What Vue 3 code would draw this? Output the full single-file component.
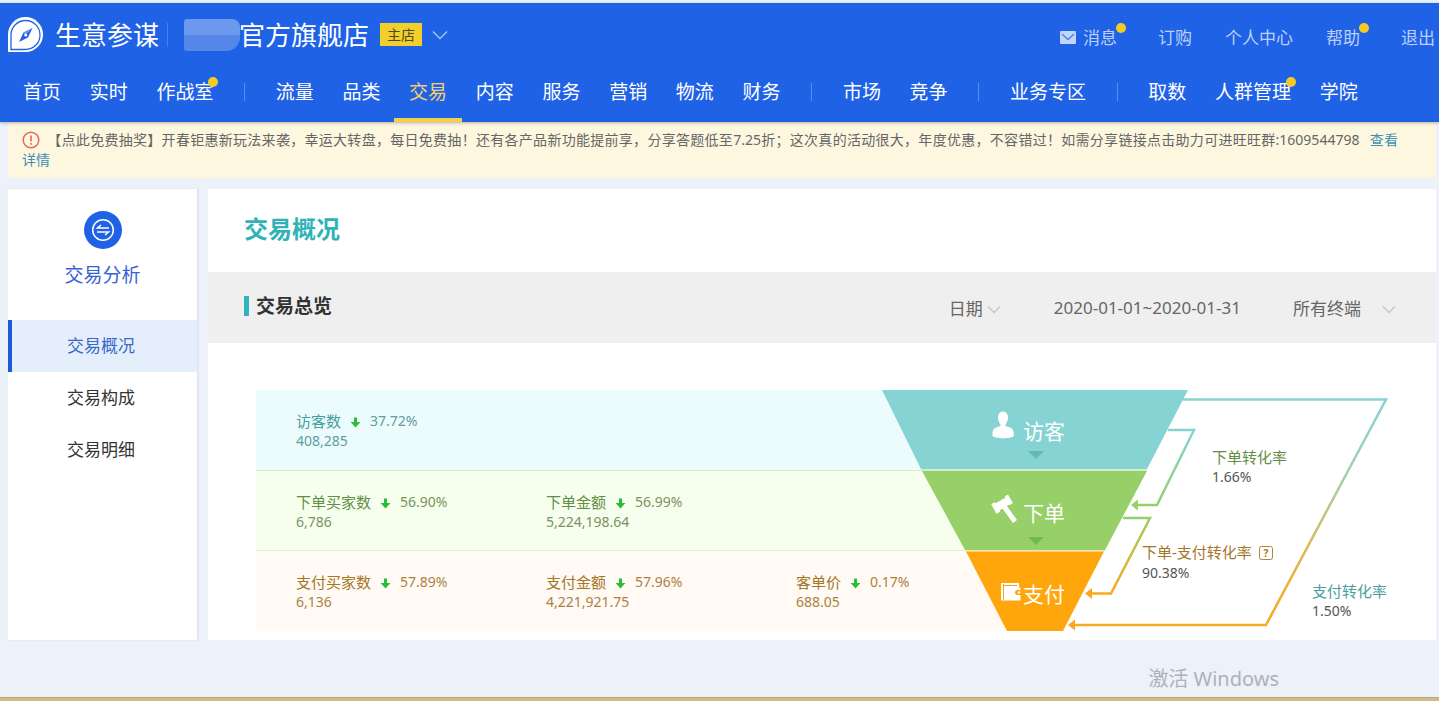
<script setup>
import { ref } from 'vue'

const navItems = [
  { text: '首页' }, { text: '实时' }, { text: '作战室', dot: true }, { sep: true },
  { text: '流量' }, { text: '品类' }, { text: '交易', active: true }, { text: '内容' },
  { text: '服务' }, { text: '营销' }, { text: '物流' }, { text: '财务' }, { sep: true },
  { text: '市场' }, { text: '竞争' }, { sep: true },
  { text: '业务专区' }, { sep: true },
  { text: '取数' }, { text: '人群管理', dot: true }, { text: '学院' },
]

const sideItems = ['交易概况', '交易构成', '交易明细']

const rows = [
  { tone: 'teal', metrics: [{ name: '访客数', change: '37.72%', value: '408,285' }] },
  {
    tone: 'green',
    metrics: [
      { name: '下单买家数', change: '56.90%', value: '6,786' },
      { name: '下单金额', change: '56.99%', value: '5,224,198.64' },
    ],
  },
  {
    tone: 'orange',
    metrics: [
      { name: '支付买家数', change: '57.89%', value: '6,136' },
      { name: '支付金额', change: '57.96%', value: '4,221,921.75' },
      { name: '客单价', change: '0.17%', value: '688.05' },
    ],
  },
]

const dateType = ref('日期')
const terminal = ref('所有终端')
</script>

<template>
  <div class="page">
    <header class="header">
      <div class="brand-row">
        <svg class="logo" width="36" height="36" viewBox="0 0 36 36" aria-hidden="true">
          <path d="M0 35V17.500A17.500 17.500 0 1 1 17.500 35Z" fill="#fff" />
          <path d="M3 32.500V17.500A14.500 14.500 0 1 1 17.500 32.500Z" fill="none" stroke="#2062e6" stroke-width="1.300" />
          <path d="M24.500 11L20 20.500L11 25L15.500 15.500Z" fill="#2062e6" />
          <path d="M24.500 11L15.500 15.500L17.500 18Z" fill="#6c98ef" />
          <circle cx="17.700" cy="18" r="1.500" fill="#fff" />
        </svg>
        <span class="brand">生意参谋</span>
        <span class="brand-line"></span>
        <span class="mask"></span>
        <span class="shop">官方旗舰店</span>
        <span class="badge">主店</span>
        <button class="shop-toggle" type="button" aria-label="切换店铺">
          <svg width="16" height="10" viewBox="0 0 16 10"><path d="M1 1.500L8 8.500L15 1.500" fill="none" stroke="#a9c3f7" stroke-width="1.300" /></svg>
        </button>
        <div class="links">
          <a href="#" class="mail dotted">
            <svg width="16" height="13" viewBox="0 0 16 13" aria-hidden="true">
              <rect width="16" height="13" rx="1" fill="#c3d5fa" />
              <path d="M2 3L8 8.500L14 3" fill="none" stroke="#4a80ea" stroke-width="1.300" />
            </svg>消息</a>
          <a href="#">订购</a>
          <a href="#">个人中心</a>
          <a href="#" class="dotted">帮助</a>
          <a href="#">退出</a>
        </div>
      </div>
      <nav class="nav">
        <template v-for="(item, i) in navItems" :key="i">
          <span v-if="item.sep" class="nav-sep"></span>
          <a v-else href="#" :class="{ active: item.active, dotted: item.dot }">{{ item.text }}</a>
        </template>
      </nav>
    </header>

    <div class="notice">
      <svg class="warn" width="18" height="18" viewBox="0 0 18 18" aria-hidden="true">
        <circle cx="9" cy="9" r="7.800" fill="none" stroke="#e3685a" stroke-width="1.500" />
        <path d="M9 4.500V10.500M9 12V13.800" stroke="#e3685a" stroke-width="1.600" />
      </svg>
      <span>【点此免费抽奖】开春钜惠新玩法来袭，幸运大转盘，每日免费抽！还有各产品新功能提前享，分享答题低至7.25折；这次真的活动很大，年度优惠，不容错过！如需分享链接点击助力可进旺旺群:1609544798</span>
      <a href="#">查看<span class="keep">详情</span></a>
    </div>

    <div class="body">
      <aside class="side">
        <div class="side-head">
          <svg width="38" height="38" viewBox="0 0 38 38" aria-hidden="true">
            <circle cx="19" cy="19" r="19" fill="#2062e6" />
            <circle cx="19" cy="19" r="10.300" fill="none" stroke="#fff" stroke-width="1.500" />
            <path d="M25 17H13.500L17 14M13 21H24.500L21 24" fill="none" stroke="#fff" stroke-width="1.500" />
          </svg>
          <span>交易分析</span>
        </div>
        <a v-for="(item, i) in sideItems" :key="item" href="#" class="side-item" :class="{ on: i === 0 }">{{ item }}</a>
      </aside>

      <main class="main">
        <h1>交易概况</h1>
        <div class="bar">
          <h2>交易总览</h2>
          <label class="pick">
            <select v-model="dateType" class="date-select" aria-label="日期类型"><option>日期</option></select>
            <svg width="14" height="9" viewBox="0 0 14 9" aria-hidden="true"><path d="M1 1.500L7 7.500L13 1.500" fill="none" stroke="#c6c6c6" stroke-width="1.500" /></svg>
          </label>
          <span class="range">2020-01-01~2020-01-31</span>
          <label class="pick wide">
            <select v-model="terminal" class="term-select" aria-label="终端"><option>所有终端</option></select>
            <svg width="14" height="9" viewBox="0 0 14 9" aria-hidden="true"><path d="M1 1.500L7 7.500L13 1.500" fill="none" stroke="#c6c6c6" stroke-width="1.500" /></svg>
          </label>
        </div>

        <div class="chart">
          <div class="rows">
            <div v-for="row in rows" :key="row.tone" class="row" :class="row.tone">
              <div v-for="m in row.metrics" :key="m.name" class="metric">
                <div class="line">
                  <span class="name">{{ m.name }}</span>
                  <svg width="11" height="11" viewBox="0 0 11 11" aria-label="下降"><path d="M4 0.500H7V5H10.500L5.500 10.500L0.500 5H4Z" fill="#2bbd3a" /></svg>
                  <span>{{ m.change }}</span>
                </div>
                <div class="line">{{ m.value }}</div>
              </div>
            </div>
          </div>

          <svg class="funnel" width="508" height="241" viewBox="0 0 508 241">
            <defs>
              <linearGradient id="gAll" gradientUnits="userSpaceOnUse" x1="0" y1="9" x2="0" y2="235">
                <stop offset="0" stop-color="#86d3d3" /><stop offset="0.350" stop-color="#a3cfae" />
                <stop offset="0.650" stop-color="#dcb95a" /><stop offset="1" stop-color="#f8a91f" />
              </linearGradient>
              <linearGradient id="gTop" gradientUnits="userSpaceOnUse" x1="0" y1="40" x2="0" y2="115">
                <stop offset="0" stop-color="#86d3d3" /><stop offset="1" stop-color="#97cf68" />
              </linearGradient>
              <linearGradient id="gLow" gradientUnits="userSpaceOnUse" x1="0" y1="128" x2="0" y2="203">
                <stop offset="0" stop-color="#97cf68" /><stop offset="1" stop-color="#f8a91f" />
              </linearGradient>
            </defs>
            <path d="M0 0H306L265 79H39Z" fill="#86d3d3" />
            <path d="M39 79H265V81H40Z" fill="#d3ecd2" />
            <path d="M40 81H265L223 160H83Z" fill="#97cf68" />
            <path d="M83 160H223L222 161.500H84Z" fill="#f3e6b5" />
            <path d="M84 161.500H222L181 241H125Z" fill="#ffa60d" />
            <path d="M146 61H162L154 69Z" fill="#62bcb6" />
            <path d="M146 147H162L154 155Z" fill="#70b955" />

            <g fill="none" stroke-width="2.500">
              <path d="M301 9.500H504L384 235H192" stroke="url(#gAll)" />
              <path d="M286 40H312L275 115H255" stroke="url(#gTop)" />
              <path d="M241 128H268L229 203.500H209" stroke="url(#gLow)" />
            </g>
            <path d="M186 235L193 229.500V240.500Z" fill="#f8a91f" />
            <path d="M249 115L256 109.500V120.500Z" fill="#97cf68" />
            <path d="M203 203.500L210 198V209Z" fill="#f8a91f" />

            <path d="M121 21.500C117.500 21.500 115.800 24.500 116 28C116.200 31 117.200 33 118.500 34.500V36C114 37 110.500 38.500 110.500 43V46C113 49 129 49 131.800 46V43C131.800 38.500 128 37 123.500 36V34.500C124.800 33 125.800 31 126 28C126.200 24.500 124.500 21.500 121 21.500Z" fill="#fff" />
            <g fill="#fff">
              <g transform="rotate(-30 120.500 114)">
                <rect x="112" y="110" width="17" height="8" />
                <rect x="110.500" y="108.500" width="4.500" height="11" rx="1" />
                <rect x="126" y="108.500" width="4" height="10" rx="1" />
              </g>
              <path d="M121 115L133 131.500" stroke="#fff" stroke-width="5" />
            </g>
            <path d="M119 193H137V197.500H138.500V210.500H119Z" fill="#fff" />
            <path d="M121.500 194V209.500M122 195.500H135" fill="none" stroke="#ffa60d" stroke-width="1" />
            <path d="M139 200H135.500A2.300 2.300 0 0 0 135.500 205H139Z" fill="#ffa60d" />
            <circle cx="137" cy="202.500" r="1.200" fill="#fff" />

            <g fill="#fff" font-size="21">
              <text x="141" y="49">访客</text>
              <text x="141" y="131">下单</text>
              <text x="141" y="212">支付</text>
            </g>
            <g font-size="15">
              <text x="330" y="73" fill="#648d45">下单转化率</text>
              <text x="260" y="168" fill="#a37628">下单-支付转化率</text>
              <text x="430" y="207" fill="#469fa0">支付转化率</text>
            </g>
            <g font-size="14" fill="#555">
              <text x="330" y="92">1.66%</text>
              <text x="260" y="188">90.38%</text>
              <text x="430" y="226">1.50%</text>
            </g>
            <rect x="377.500" y="156.500" width="13" height="13" rx="2" fill="none" stroke="#b0843c" />
            <text x="384" y="167" font-size="10" font-weight="700" text-anchor="middle" fill="#a37628">?</text>
          </svg>
        </div>
      </main>
    </div>

    <div class="watermark">激活 Windows</div>
    <div class="strip"></div>
  </div>
</template>

<style>
body { margin: 0; background: #edf1fa; }
</style>

<style scoped>
.page {
  position: relative;
  display: flex;
  flex-direction: column;
  min-height: 100vh;
  box-sizing: border-box;
  border-top: 3px solid #eaf1f0;
  font-family: "Noto Sans", "Noto Sans CJK SC", sans-serif;
  color: #333;
}
a { color: inherit; text-decoration: none; }
button { padding: 0; border: 0; background: none; }
svg { flex: none; display: block; }

.header { position: relative; z-index: 1; background: #2062e6; color: #fff; box-shadow: 0 1px 3px rgba(60, 70, 110, 0.4); }
.brand-row { display: flex; align-items: center; height: 63px; padding: 0 4px 0 8px; }
.brand { margin-left: 11px; font-size: 26px; line-height: 32px; }
.brand-line { width: 1px; height: 24px; margin: 0 16px 0 8px; background: #4a80ea; }
.mask { width: 56px; height: 32px; border-radius: 3px 8px 14px 3px; background: linear-gradient(#6c98ee 50%, #5587ea 50%); }
.shop { margin-left: -1px; font-size: 26px; line-height: 32px; }
.badge { margin-left: 11px; padding: 0 7px; background: #f3cf2a; color: #4a4a2a; font-size: 14px; line-height: 23px; }
.shop-toggle { margin-left: 10px; }
.links { display: flex; gap: 33px; margin-left: auto; color: #bcd0f9; font-size: 17px; line-height: 24px; padding-top: 6px; }
.links .dotted { margin-right: 8px; }
.mail { display: flex; align-items: center; gap: 7px; }
.dotted { position: relative; }
.dotted::after {
  content: "";
  position: absolute;
  top: -3px;
  right: -9px;
  width: 10px;
  height: 10px;
  border-radius: 50%;
  background: #f4cb22;
}
.nav { display: flex; justify-content: space-between; align-items: center; height: 56px; padding: 0 81px 0 23px; font-size: 19px; line-height: 52px; }
.nav a { height: 56px; }
.nav .dotted::after { top: 11px; right: -5px; }
.nav .active { position: relative; color: #f5d06b; }
.nav .active::after { content: ""; position: absolute; left: -15px; right: -15px; bottom: 0; height: 4px; background: #f3cf4a; }
.nav-sep { width: 1px; height: 18px; margin: 0 2px 4px; background: #5d8dec; }

.notice {
  margin: 0 3px 0 8px;
  padding: 8px 38px 8px 14px;
  border-radius: 0 0 4px 4px;
  background: #fdf7e0;
  color: #666;
  font-size: 14px;
  line-height: 20px;
  text-align: justify;
}
.warn { display: inline-block; vertical-align: -4px; margin-right: 7px; }
.notice a { margin-left: 10px; color: #3f8fb3; }
.keep { white-space: nowrap; }

.body { display: flex; gap: 11px; margin: 11px 3px 0 8px; }
.side { width: 189px; flex: none; background: #fff; box-shadow: 1px 0 2px rgba(120, 140, 190, 0.2); }
.side-head { display: flex; flex-direction: column; align-items: center; gap: 12px; padding: 22px 0 31px; color: #3a62d2; font-size: 19px; line-height: 28px; }
.side-item { display: block; font-size: 17px; line-height: 52px; padding-left: 59px; }
.side-item.on { padding-left: 55px; border-left: 4px solid #1c5bd8; background: #e5effc; color: #3a68c8; }

.main { flex: 1; min-width: 0; background: #fff; }
h1 { margin: 0; padding: 20px 36px 23px; color: #2fb2b8; font-size: 24px; line-height: 40px; }
.bar { display: flex; align-items: center; height: 71px; padding: 0 40px 0 36px; background: #efefef; color: #666; font-size: 17px; }
h2 { display: flex; align-items: center; gap: 7px; margin: 0 auto 4px 0; color: #333; font-size: 19px; line-height: 24px; }
h2::before { content: ""; width: 5px; height: 20px; background: #2fb5bd; }
.pick { display: flex; align-items: center; gap: 4px; padding-top: 3px; }
.pick.wide { gap: 20px; }
select { appearance: none; margin: 0; padding: 0; border: 0; background: none; color: inherit; font: inherit; line-height: 24px; }
.date-select { width: 34px; }
.term-select { width: 69px; }
.range { margin: 0 52px 0 53px; }

.chart { display: grid; grid-template-columns: 1fr 150px 358px; padding: 47px 46px 9px 48px; }
.rows { grid-area: 1 / 1 / 2 / 3; }
.row { display: flex; height: 80px; box-sizing: border-box; padding: 21px 0 0 40px; font-size: 14px; line-height: 20px; }
.metric { width: 250px; flex: none; }
.line { display: flex; align-items: center; }
.name { font-size: 15px; }
.line svg { margin: 2px 9px 0 9px; }
.teal { background: #ecfbfb; color: #5f9ea4; }
.green { background: #f6ffee; color: #78935f; border-top: 1px solid #d9e8d8; }
.orange { height: 81px; background: #fffaf4; color: #ac8045; border-top: 1px solid #ebe6dc; }
.teal .name { color: #469fa0; }
.green .name { color: #648d45; }
.orange .name { color: #a37628; }
.funnel { grid-area: 1 / 2 / 2 / 4; }

.watermark { position: absolute; right: 160px; bottom: 6px; color: #aeb2b8; font-size: 20px; line-height: 32px; white-space: nowrap; }
.strip { height: 4px; margin-top: auto; background: #d6ba86; border-top: 1px solid #b8a67e; box-sizing: border-box; }
</style>
